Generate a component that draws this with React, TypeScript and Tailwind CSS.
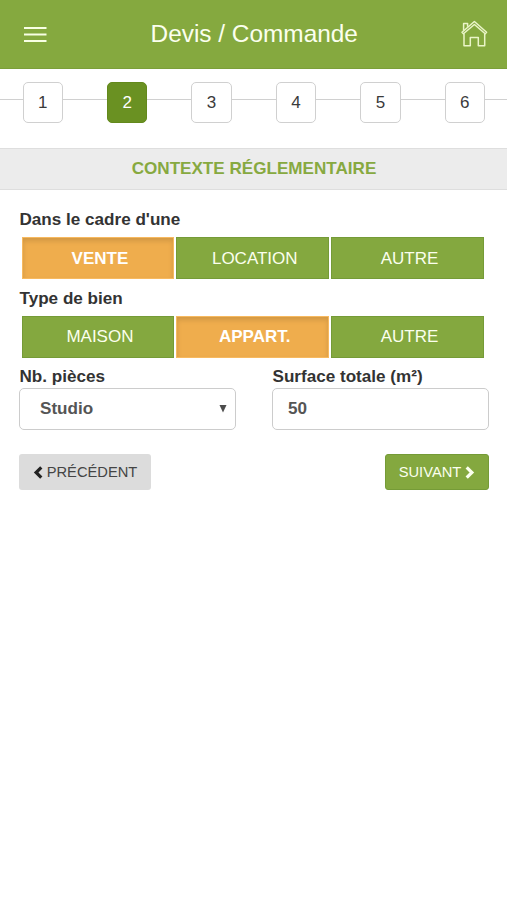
import { Fragment } from 'react';

type Choice = {
  label: string;
  selected?: boolean;
};

const STEPS: readonly number[] = [1, 2, 3, 4, 5, 6];
const CURRENT_STEP = 2;

const CONTEXTS: readonly Choice[] = [
  { label: 'VENTE', selected: true },
  { label: 'LOCATION' },
  { label: 'AUTRE' },
];

const PROPERTY_TYPES: readonly Choice[] = [
  { label: 'MAISON' },
  { label: 'APPART.', selected: true },
  { label: 'AUTRE' },
];

function MenuIcon() {
  return (
    <svg width="23" height="17" viewBox="0 0 23 17" stroke="#f8ffe4" strokeWidth="2" aria-hidden="true">
      <path d="M0 2h22.5M0 8.5h22.5M0 15h22.5" />
    </svg>
  );
}

function HomeIcon() {
  return (
    <svg
      width="28"
      height="28"
      viewBox="0 0 28 28"
      fill="none"
      stroke="#eaf5c8"
      strokeWidth="1.5"
      strokeLinejoin="round"
      aria-hidden="true"
    >
      <path d="M2 12.3 14.4 1.5l12.2 10.8-1.4 1.5L14.4 4.5 3.4 13.8z" />
      <path d="M3.6 10.6V3.4h4v3.4" />
      <path d="M4 13.6v12.2h6.3v-8.4h8v8.4h6.4V13.6" />
    </svg>
  );
}

function Chevron({ direction }: { direction: 'left' | 'right' }) {
  return (
    <svg width="10" height="13" viewBox="0 0 10 13" fill="none" stroke="currentColor" strokeWidth="3.2" aria-hidden="true">
      <path d={direction === 'left' ? 'M8.3 1.3 3.1 6.5l5.2 5.2' : 'M1.7 1.3l5.2 5.2-5.2 5.2'} />
    </svg>
  );
}

function StepBar() {
  return (
    <nav className="flex h-[79px] items-start pt-[12.5px]">
      <span className="mt-[17px] h-px w-[22.5px] bg-[#d0d0d0]" />
      {STEPS.map((step, index) => (
        <Fragment key={step}>
          {index > 0 && <span className="mt-[17px] h-px flex-1 bg-[#d0d0d0]" />}
          <button
            type="button"
            className={
              step === CURRENT_STEP
                ? 'h-[41.5px] w-[40.5px] rounded-[5px] border border-[#63891c] bg-[#6a9122] text-[17px] text-white'
                : 'h-[41.5px] w-[40.5px] rounded-[5px] border border-[#d0d0d0] bg-white text-[17px] text-[#3a3a3a]'
            }
          >
            {step}
          </button>
        </Fragment>
      ))}
      <span className="mt-[17px] h-px w-[22px] bg-[#d0d0d0]" />
    </nav>
  );
}

function ChoiceRow({ choices }: { choices: readonly Choice[] }) {
  return (
    <div className="grid grid-cols-3 gap-[2px] pr-[5px] pl-[2.5px]">
      {choices.map((choice) => (
        <button
          key={choice.label}
          type="button"
          className={
            choice.selected
              ? 'h-[42px] border border-[#f7b95f] bg-[#efad4d] pt-px pl-[4px] text-[17px] font-bold text-white shadow-[inset_0_3px_5px_rgba(0,0,0,0.125)]'
              : 'h-[42px] border border-[#759b37] bg-[#84a83f] pt-px pl-[4px] text-[17px] text-[#fbffee]'
          }
        >
          {choice.label}
        </button>
      ))}
    </div>
  );
}

export default function App() {
  return (
    <div className="min-h-screen bg-white font-['Liberation_Sans',Arial,sans-serif] text-[17.1px] text-[#333333]">
      <header className="flex h-[69px] items-center justify-between border-b border-[#7b9f39] bg-[#85a93f] pr-[19px] pl-[23.5px]">
        <button type="button" aria-label="Menu">
          <MenuIcon />
        </button>
        <h1 className="pl-[2px] text-[24.4px] leading-none text-[#fbffee]">Devis / Commande</h1>
        <button type="button" aria-label="Accueil">
          <HomeIcon />
        </button>
      </header>

      <StepBar />

      <h2 className="flex h-[41.5px] items-center justify-center border-y border-[#dedede] bg-[#ececec] pl-px text-[17.1px] font-bold text-[#87a940]">
        CONTEXTE RÉGLEMENTAIRE
      </h2>

      <form className="pr-[18px] pl-[19px] pt-[18.5px]">
        <p className="h-[29px] pl-[0.5px] leading-[24px] font-bold">Dans le cadre d'une</p>
        <ChoiceRow choices={CONTEXTS} />
        <p className="mt-[7.5px] h-[29px] pl-[0.5px] leading-[24px] font-bold">Type de bien</p>
        <ChoiceRow choices={PROPERTY_TYPES} />

        <div className="mt-[7px] grid grid-cols-2 gap-[36px]">
          <div>
            <p className="h-[23.5px] pl-[0.5px] leading-[24px] font-bold">Nb. pièces</p>
            <div className="flex h-[42px] items-center justify-between rounded-[5px] border border-[#cccccc] pr-[8px] pl-[20px] font-bold text-[#555555]">
              Studio
              <svg width="8" height="8" viewBox="0 0 8 8" fill="#4c4c4c" aria-hidden="true">
                <path d="M.5 0h7L4 7.5z" />
              </svg>
            </div>
          </div>
          <label>
            <span className="block h-[23.5px] pl-[0.5px] leading-[24px] font-bold">Surface totale (m²)</span>
            <input
              type="text"
              defaultValue="50"
              className="block h-[42px] w-full rounded-[5px] border border-[#cccccc] px-[15px] font-bold text-[#555555]"
            />
          </label>
        </div>

        <div className="mt-[24px] flex justify-between">
          <button
            type="button"
            className="flex h-[36px] w-[132px] items-center justify-center gap-[4px] rounded-[3px] bg-[#dcdcdc] text-[14.7px] text-[#444444]"
          >
            <span className="text-[#222222]">
              <Chevron direction="left" />
            </span>
            PRÉCÉDENT
          </button>
          <button
            type="button"
            className="flex h-[36px] w-[104px] items-center justify-center gap-[4px] rounded-[3px] border border-[#759b37] bg-[#84a83f] text-[14.7px] text-[#fbffee]"
          >
            SUIVANT
            <Chevron direction="right" />
          </button>
        </div>
      </form>
    </div>
  );
}
